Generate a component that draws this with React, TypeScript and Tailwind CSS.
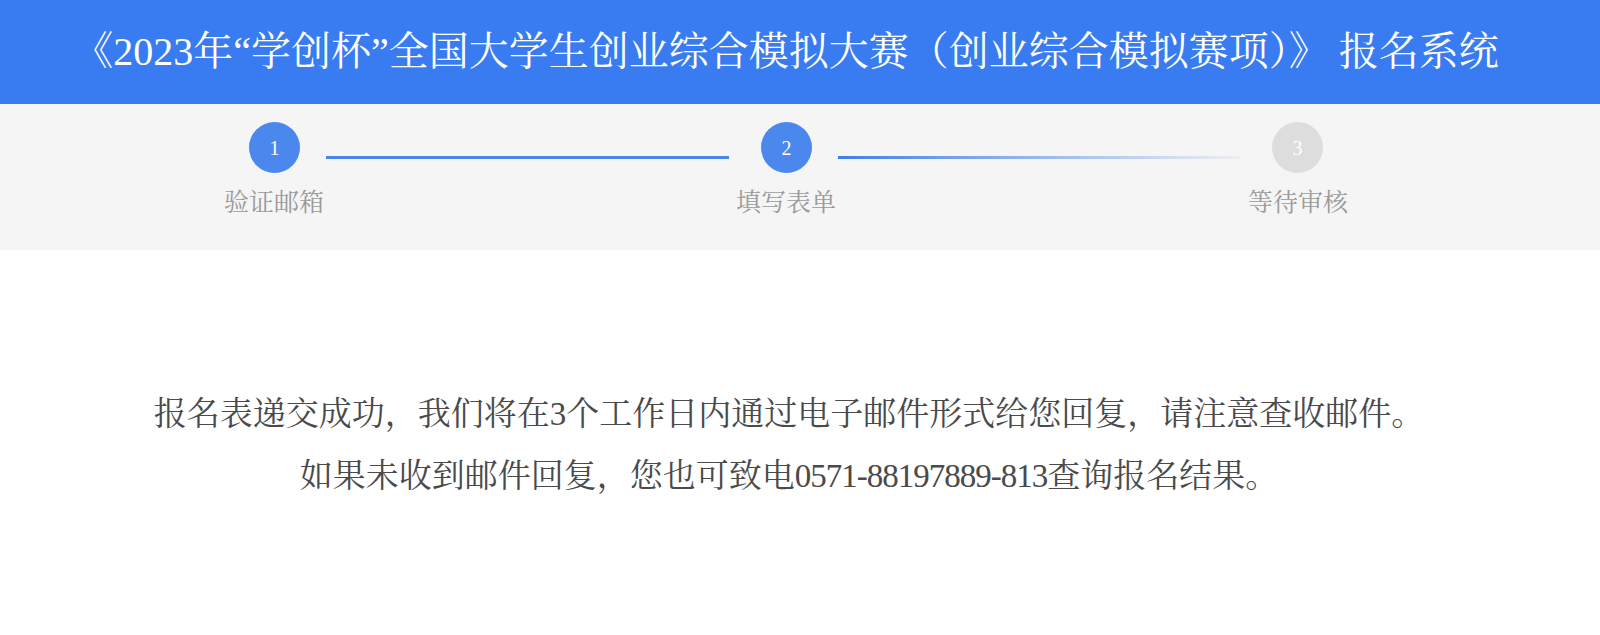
import React from 'react';

const serif = 'font-["Liberation_Serif","Noto_Serif_CJK_SC","AR_PL_UMing_CN","Noto_Sans_CJK_SC",serif]';

const steps = [
  { n: 1, label: '验证邮箱', done: true },
  { n: 2, label: '填写表单', done: true },
  { n: 3, label: '等待审核', done: false },
];

function Circle({ n, done }: { n: number; done: boolean }) {
  return (
    <div
      className={`flex h-[51px] w-[51px] shrink-0 items-center justify-center rounded-full text-[20px] text-white ${
        done ? 'bg-[#4a88ee]' : 'bg-[#dddddd]'
      }`}
    >
      {n}
    </div>
  );
}

export default function App() {
  return (
    <div className={`min-h-screen bg-white ${serif}`}>
      <header className="flex h-[104px] items-center justify-center bg-[#397bf0] pr-[28px] text-[40px] text-white">
        《2023年“学创杯”全国大学生创业综合模拟大赛（创业综合模拟赛项）》 报名系统
      </header>

      <div className="h-[146px] bg-[#f5f5f5] pt-[18px]">
        <div className="flex items-center pl-[249px]">
          <Circle n={1} done />
          <div className="ml-[26px] mr-[32px] mt-[20px] h-[3px] w-[403px] bg-[#4a86e8]" />
          <Circle n={2} done />
          <div className="ml-[26px] mr-[32px] mt-[20px] h-[3px] w-[402px] bg-gradient-to-r from-[#3f7fe8] to-[#eeeeee]" />
          <Circle n={3} done={false} />
        </div>
        <div className="mt-[10px] flex pl-[18px]">
          {steps.map((s) => (
            <div key={s.n} className="w-[512px] text-center text-[25px] leading-[40px] text-[#9a9a9a]">
              {s.label}
            </div>
          ))}
        </div>
      </div>

      <div className="flex flex-col items-center pr-[22px] pt-[133px] text-[33px] leading-[62px] text-[#4a4a4a]">
        <p>报名表递交成功，我们将在3个工作日内通过电子邮件形式给您回复，请注意查收邮件。</p>
        <p>
          如果未收到邮件回复，您也可致电<span className="tracking-[-1px]">0571-88197889-813</span>查询报名结果。
        </p>
      </div>
    </div>
  );
}
